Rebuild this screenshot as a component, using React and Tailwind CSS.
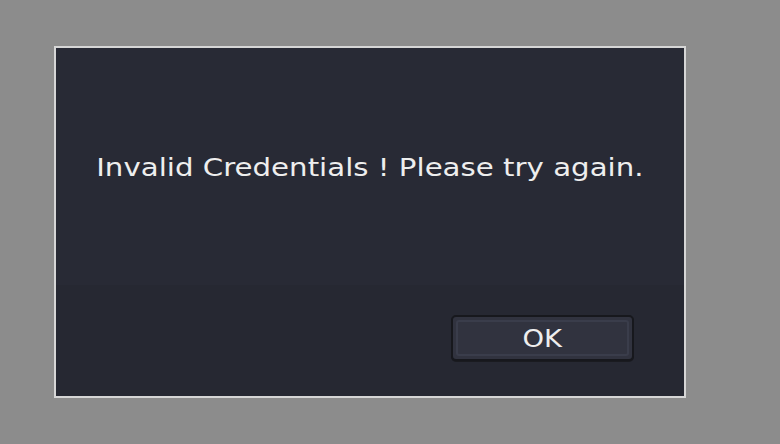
export default function App() {
  return (
    <div
      className="w-[780px] h-[444px] bg-[#8c8c8c] pt-[46px] pl-[54px]"
      style={{ fontFamily: '"DejaVu Sans", sans-serif' }}
    >
      <div className="w-[632px] h-[352px] border-2 border-[#d6d6d6] bg-[#282a35] flex flex-col">
        <div className="h-[237px] flex items-center justify-center pt-[2px]">
          <p className="text-[25px] leading-none text-[#eeeeee] whitespace-nowrap scale-x-[1.17]">
            Invalid Credentials ! Please try again.
          </p>
        </div>
        <div className="flex-1 bg-[#262832] flex justify-end items-start pt-[30px] pr-[50px]">
          <button className="w-[183px] h-[46px] rounded-[5px] border-2 border-[#17181d] bg-[#31333f] p-[3px] shadow-[0_1px_0_#1a1b20]">
            <div className="w-full h-full rounded-[3px] border-2 border-[#3a3d4b] flex items-center justify-center text-[24px] leading-none text-[#eeeeee]">
              <span className="scale-x-[1.14] pt-[1px]">OK</span>
            </div>
          </button>
        </div>
      </div>
    </div>
  );
}
